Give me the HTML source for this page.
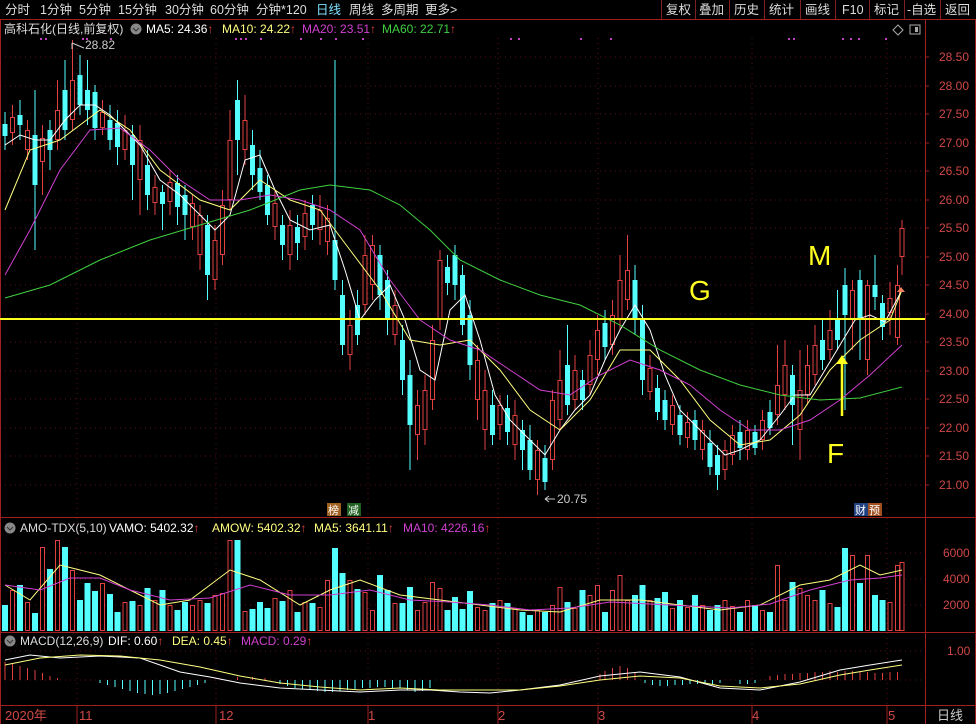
<!DOCTYPE html>
<html><head><meta charset="utf-8">
<style>
html,body{margin:0;padding:0;background:#000;width:976px;height:724px;overflow:hidden}
svg{display:block}
text{font-family:"Liberation Sans","Noto Sans CJK SC",sans-serif}
</style></head><body>
<svg width="976" height="724" xmlns="http://www.w3.org/2000/svg">
<rect width="976" height="724" fill="#000"/>
<!-- grid -->
<g stroke="#5a1010" stroke-dasharray="1 4">
<line x1="0" y1="57" x2="925" y2="57"/><line x1="0" y1="86" x2="925" y2="86"/><line x1="0" y1="114" x2="925" y2="114"/><line x1="0" y1="143" x2="925" y2="143"/><line x1="0" y1="171" x2="925" y2="171"/><line x1="0" y1="200" x2="925" y2="200"/><line x1="0" y1="228" x2="925" y2="228"/><line x1="0" y1="257" x2="925" y2="257"/><line x1="0" y1="285" x2="925" y2="285"/><line x1="0" y1="314" x2="925" y2="314"/><line x1="0" y1="342" x2="925" y2="342"/><line x1="0" y1="371" x2="925" y2="371"/><line x1="0" y1="399" x2="925" y2="399"/><line x1="0" y1="428" x2="925" y2="428"/><line x1="0" y1="456" x2="925" y2="456"/><line x1="0" y1="485" x2="925" y2="485"/>
<line x1="0" y1="553" x2="925" y2="553"/><line x1="0" y1="579" x2="925" y2="579"/><line x1="0" y1="605" x2="925" y2="605"/>
<line x1="0" y1="651" x2="925" y2="651"/><line x1="0" y1="680" x2="925" y2="680"/>
<line x1="77" y1="38" x2="77" y2="705"/><line x1="216" y1="38" x2="216" y2="705"/><line x1="368" y1="38" x2="368" y2="705"/><line x1="498" y1="38" x2="498" y2="705"/><line x1="598" y1="38" x2="598" y2="705"/><line x1="752" y1="38" x2="752" y2="705"/><line x1="887" y1="38" x2="887" y2="705"/>
</g>
<g stroke="#a02020"><path d="M77 705V724M216 705V724M368 705V724M498 705V724M598 705V724M752 705V724M887 705V724"/></g>
<!-- candles -->
<path fill="none" stroke="#54ffff" stroke-width="1" d="M5 112V150M20 100V140M35 90V250M50 120V170M65 60V140M80 55V115M87.5 60V125M95 85V140M110 105V150M117.5 110V165M132.5 125V200M147.5 150V210M162.5 185V230M177.5 175V225M185 185V240M207.5 215V300M237.5 80V175M252.5 130V190M260 150V200M267.5 175V225M282.5 215V260M297.5 215V260M312.5 195V240M335 60V290M342.5 280V355M357.5 290V345M380 245V310M387.5 270V335M402.5 325V395M410 360V470M447.5 255V295M455 245V300M462.5 265V335M470 300V380M492.5 390V445M507.5 395V445M522.5 420V470M530 425V480M545 445V490M567.5 325V415M582.5 370V410M605 310V360M635 265V335M642.5 305V395M657.5 375V420M665 390V430M680 405V445M695 410V450M710 430V475M717.5 445V490M740 420V460M755 425V455M770 400V435M792.5 365V445M822.5 320V370M837.5 290V350M845 268V410M860 270V360M875 255V310M882.5 295V340"/>
<path fill="none" stroke="#54ffff" stroke-width="5" d="M5 124V136M20 115V125M35 135V185M50 130V150M65 90V130M80 75V105M87.5 90V110M95 92V128M110 120V140M117.5 123V147M132.5 135V165M147.5 165V195M162.5 192V204M177.5 183V207M185 195V215M207.5 225V275M237.5 100V140M252.5 145V175M260 168V192M267.5 185V215M282.5 225V245M297.5 227V243M312.5 205V225M335 240V280M342.5 295V345M357.5 305V335M380 255V295M387.5 280V320M402.5 340V380M410 375V425M447.5 267V283M455 255V285M462.5 275V325M470 315V365M492.5 405V435M507.5 408V432M522.5 430V450M530 440V470M545 458V482M567.5 365V405M582.5 380V400M605 323V347M635 280V320M642.5 320V380M657.5 388V412M665 400V420M680 415V435M695 420V440M710 443V467M717.5 455V475M740 432V448M755 432V448M770 412V428M792.5 375V405M822.5 340V360M837.5 320V340M845 285V315M860 280V320M875 285V297M882.5 303V327"/>
<path fill="none" stroke="#e04040" stroke-width="1" d="M12.5 105V145M27.5 120V160M42.5 125V195M57.5 80V150M72.5 40V130M102.5 100V135M125 115V160M140 125V215M155 175V215M170 170V215M192.5 195V240M200 205V270M215 225V290M222.5 190V265M230 110V210M245 95V165M275 190V240M290 210V270M305 200V250M320 195V245M327.5 205V255M350 310V370M365 235V315M372.5 235V300M395 290V345M417.5 390V460M425 375V445M432.5 325V410M440 250V330M477.5 345V420M485 370V450M500 395V440M515 400V460M537.5 440V495M552.5 390V470M560 350V430M575 355V410M590 340V395M597.5 315V375M612.5 300V355M620 255V330M627.5 235V310M650 355V400M672.5 395V435M687.5 412V448M702.5 420V460M725 440V480M732.5 425V465M747.5 420V460M762.5 410V450M777.5 345V425M785 340V410M800 350V460M807.5 345V405M815 325V385M830 310V360M852.5 280V350M867.5 280V375M890 282V335M897.5 265V345M902 220V275"/>
<g fill="none" stroke-width="5">
<path id="rb" stroke="#e04040" d="M12.5 117V133M27.5 130V150M42.5 138V162M57.5 110V140M72.5 80V120M102.5 112V128M125 130V150M140 140V180M155 187V203M170 182V202M192.5 203V227M200 215V255M215 240V280M222.5 205V255M230 140V200M245 120V150M275 203V227M290 225V255M305 213V237M320 210V230M327.5 218V242M350 325V355M365 255V305M372.5 245V285M395 305V335M417.5 405V435M425 390V430M432.5 340V400M440 260V320M477.5 360V400M485 390V430M500 405V425M515 415V445M537.5 450V480M552.5 400V460M560 380V420M575 370V400M590 355V385M597.5 330V360M612.5 315V345M620 280V320M627.5 270V300M650 368V392M672.5 405V425M687.5 422V438M702.5 430V450M725 450V470M732.5 435V455M747.5 430V450M762.5 420V440M777.5 385V415M785 365V395M800 390V430M807.5 365V395M815 345V375M830 330V350M852.5 290V320M867.5 285V360M890 298V313M897.5 285V338M902 228V257"/>
</g>
<path fill="none" stroke="#000" stroke-width="3" d="M12.5 118V132M27.5 131V149M42.5 139V161M57.5 111V139M72.5 81V119M102.5 113V127M125 131V149M140 141V179M155 188V202M170 183V201M192.5 204V226M200 216V254M215 241V279M222.5 206V254M230 141V199M245 121V149M275 204V226M290 226V254M305 214V236M320 211V229M327.5 219V241M350 326V354M365 256V304M372.5 246V284M395 306V334M417.5 406V434M425 391V429M432.5 341V399M440 261V319M477.5 361V399M485 391V429M500 406V424M515 416V444M537.5 451V479M552.5 401V459M560 381V419M575 371V399M590 356V384M597.5 331V359M612.5 316V344M620 281V319M627.5 271V299M650 369V391M672.5 406V424M687.5 423V437M702.5 431V449M725 451V469M732.5 436V454M747.5 431V449M762.5 421V439M777.5 386V414M785 366V394M800 391V429M807.5 366V394M815 346V374M830 331V349M852.5 291V319M867.5 286V359M890 299V312M897.5 286V337M902 229V256"/>
<!-- MAs -->
<g fill="none" stroke-width="1">
<polyline stroke="#fff" points="5,145 20,135 35,140 50,140 65,120 80,105 95,105 110,115 125,130 140,145 160,180 180,195 200,215 215,230 230,215 245,160 260,155 275,190 290,220 310,230 330,225 345,270 360,320 375,300 390,285 405,320 420,370 435,380 450,310 465,295 480,340 495,395 510,420 530,440 545,455 560,430 575,410 590,395 605,360 620,330 635,305 650,330 665,375 680,410 695,425 710,440 725,455 740,450 760,440 780,415 795,395 810,395 825,370 840,345 855,320 870,315 885,322 902,290"/>
<polyline stroke="#ffff80" points="5,210 30,150 60,140 100,110 130,130 160,170 200,200 230,210 260,180 290,200 320,210 350,250 380,290 410,340 440,345 470,340 500,370 530,410 560,430 590,400 620,350 650,350 680,380 710,420 740,445 770,440 800,415 830,370 860,340 890,320 902,290"/>
<polyline stroke="#d040d0" points="5,275 30,230 60,170 90,130 120,128 150,150 180,180 210,200 240,200 270,195 300,200 330,210 360,230 390,280 420,320 450,340 480,350 510,370 540,390 570,395 600,375 630,360 660,370 690,385 720,410 750,430 780,430 810,420 840,400 870,375 902,345"/>
<polyline stroke="#40d040" points="5,298 50,285 100,260 150,240 200,225 250,210 300,190 330,185 370,190 400,205 430,230 460,260 500,280 540,295 580,305 620,325 660,350 700,370 740,385 780,395 820,400 860,398 902,387"/>
</g>
<!-- volume -->
<path fill="none" stroke="#54ffff" stroke-width="6" d="M5 605V631M20 585V631M35 613V631M50 569V631M65 547V631M80 600V631M87.5 583V631M95 591V631M110 594V631M117.5 612V631M132.5 601V631M147.5 588V631M162.5 590V631M177.5 610V631M185 602V631M207.5 603V631M237.5 540V631M252.5 609V631M260 602V631M267.5 608V631M282.5 601V631M297.5 612V631M312.5 603V631M335 548V631M342.5 573V631M357.5 589V631M380 575V631M387.5 590V631M402.5 603V631M410 587V631M447.5 610V631M455 597V631M462.5 609V631M470 591V631M492.5 603V631M507.5 603V631M522.5 612V631M530 615V631M545 612V631M567.5 602V631M582.5 590V631M605 612V631M635 595V631M642.5 585V631M657.5 598V631M665 592V631M680 600V631M695 595V631M710 610V631M717.5 605V631M740 612V631M755 605V631M770 612V631M792.5 582V631M822.5 590V631M837.5 607V631M845 548V631M860 583V631M875 595V631M882.5 600V631"/>
<path fill="none" stroke="#e04040" stroke-width="5" d="M12.5 590V631M27.5 602V631M42.5 547V631M57.5 540V631M72.5 570V631M102.5 583V631M125 602V631M140 605V631M155 600V631M170 605V631M192.5 605V631M200 600V631M215 595V631M222.5 593V631M230 540V631M245 611V631M275 598V631M290 590V631M305 602V631M320 607V631M327.5 580V631M350 580V631M365 592V631M372.5 610V631M395 603V631M417.5 610V631M425 602V631M432.5 582V631M440 588V631M477.5 607V631M485 610V631M500 600V631M515 608V631M537.5 610V631M552.5 605V631M560 587V631M575 608V631M590 595V631M597.5 585V631M612.5 590V631M620 575V631M627.5 600V631M650 600V631M672.5 608V631M687.5 607V631M702.5 605V631M725 600V631M732.5 606V631M747.5 600V631M762.5 610V631M777.5 565V631M785 600V631M800 588V631M807.5 595V631M815 600V631M830 603V631M852.5 555V631M867.5 555V631M890 602V631M897.5 565V631M902 562V631"/>
<path fill="none" stroke="#000" stroke-width="3" d="M12.5 591V630M27.5 603V630M42.5 548V630M57.5 541V630M72.5 571V630M102.5 584V630M125 603V630M140 606V630M155 601V630M170 606V630M192.5 606V630M200 601V630M215 596V630M222.5 594V630M230 541V630M245 612V630M275 599V630M290 591V630M305 603V630M320 608V630M327.5 581V630M350 581V630M365 593V630M372.5 611V630M395 604V630M417.5 611V630M425 603V630M432.5 583V630M440 589V630M477.5 608V630M485 611V630M500 601V630M515 609V630M537.5 611V630M552.5 606V630M560 588V630M575 609V630M590 596V630M597.5 586V630M612.5 591V630M620 576V630M627.5 601V630M650 601V630M672.5 609V630M687.5 608V630M702.5 606V630M725 601V630M732.5 607V630M747.5 601V630M762.5 611V630M777.5 566V630M785 601V630M800 589V630M807.5 596V630M815 601V630M830 604V630M852.5 556V630M867.5 556V630M890 603V630M897.5 566V630M902 563V630"/>
<g fill="none">
<polyline stroke="#ffff80" points="5,585 30,600 60,565 80,570 100,575 130,590 160,605 190,600 230,570 260,580 300,605 330,590 360,580 400,595 440,600 480,605 520,610 560,612 600,600 640,600 680,605 720,610 760,605 800,585 830,580 860,565 880,575 902,570"/>
<polyline stroke="#d040d0" points="5,585 40,590 70,578 100,578 130,590 170,600 210,598 250,585 290,595 330,595 370,590 410,600 450,602 490,605 530,610 570,608 610,602 650,604 690,606 730,608 770,604 810,590 850,580 880,578 902,575"/>
</g>
<!-- MACD -->
<path stroke="#e04040" d="M5 680V662M12.5 680V664M20 680V666M27.5 680V668M35 680V670M42.5 680V673M50 680V676M57.5 680V678M237.5 680V677M252.5 680V677M265 680V678M600 680V674M605 680V671M612.5 680V668M620 680V666M627.5 680V668M635 680V672M770 680V676M777.5 680V675M785 680V674M792.5 680V674M800 680V673M807.5 680V673M815 680V672M822.5 680V672M830 680V671M837.5 680V672M845 680V671M852.5 680V671M860 680V672M867.5 680V672M875 680V673M882.5 680V673M890 680V672M897.5 680V672"/>
<path stroke="#54ffff" d="M100 680V683M107.5 680V685M115 680V687M122.5 680V689M130 680V691M137.5 680V693M145 680V694M152.5 680V695M160 680V694M167.5 680V693M175 680V691M182.5 680V689M190 680V687M197.5 680V685M205 680V683M280 680V684M287.5 680V686M295 680V688M302.5 680V689M310 680V690M317.5 680V691M325 680V692M332.5 680V692M340 680V691M347.5 680V690M355 680V689M362.5 680V688M370 680V688M377.5 680V687M385 680V687M392.5 680V688M400 680V688M407.5 680V690M415 680V692M422.5 680V691M430 680V688M645 680V683M652.5 680V685M660 680V686M667.5 680V686M675 680V685M682.5 680V685M690 680V684M697.5 680V684M705 680V683M712.5 680V684M720 680V683M740 680V684M747.5 680V684M755 680V683"/>
<g fill="none">
<polyline stroke="#fff" points="5,660 30,655 60,658 100,656 140,658 180,672 210,677 240,683 280,688 320,690 360,692 400,690 430,690 460,692 490,693 520,690 560,685 600,676 640,672 680,677 720,688 760,690 800,682 840,670 870,665 902,660"/>
<polyline stroke="#ffff80" points="5,665 40,658 80,655 120,656 160,660 200,667 240,676 280,683 320,687 360,690 400,688 440,690 480,690 520,690 560,686 600,680 640,676 680,678 720,686 760,688 800,684 840,675 870,670 902,665"/>
</g>
<!-- frames -->
<g stroke="#a02020" stroke-width="1" fill="none">
<line x1="0" y1="19.5" x2="976" y2="19.5"/>
<line x1="0" y1="517.5" x2="976" y2="517.5"/>
<line x1="0" y1="632.5" x2="976" y2="632.5"/>
<line x1="0" y1="705.5" x2="976" y2="705.5"/>
<line x1="925.5" y1="19" x2="925.5" y2="724"/>
<line x1="0.5" y1="19" x2="0.5" y2="724"/>
<line x1="975.5" y1="19" x2="975.5" y2="724"/>
</g>
<!-- top tabs -->
<g font-size="12.5" fill="#ddd">
<text x="5" y="14">分时</text><text x="40" y="14">1分钟</text><text x="79" y="14">5分钟</text><text x="118" y="14">15分钟</text><text x="165" y="14">30分钟</text><text x="210" y="14">60分钟</text><text x="256" y="14">分钟*120</text><text x="316" y="14" fill="#7fe0ff">日线</text><text x="349" y="14">周线</text><text x="381" y="14">多周期</text><text x="425" y="14">更多&gt;</text>
<text x="666" y="14">复权</text><text x="699" y="14">叠加</text><text x="734" y="14">历史</text><text x="769" y="14">统计</text><text x="805" y="14">画线</text><text x="842" y="14">F10</text><text x="874" y="14">标记</text><text x="907" y="14">-自选</text><text x="945" y="14">返回</text>
</g>
<g stroke="#802020"><line x1="661.5" y1="0" x2="661.5" y2="19"/><line x1="695.5" y1="0" x2="695.5" y2="19"/><line x1="729.5" y1="0" x2="729.5" y2="19"/><line x1="764.5" y1="0" x2="764.5" y2="19"/><line x1="800.5" y1="0" x2="800.5" y2="19"/><line x1="835.5" y1="0" x2="835.5" y2="19"/><line x1="869.5" y1="0" x2="869.5" y2="19"/><line x1="904.5" y1="0" x2="904.5" y2="19"/><line x1="940.5" y1="0" x2="940.5" y2="19"/></g>
<!-- top markers -->
<path stroke="#c040c0" stroke-width="2" d="M40 39h2M45 39h2M82 39h2M86 39h2M110 39h2M235 39h2M240 39h2M245 39h2M260 39h2M300 39h2M320 39h2M335 39h2M362 39h2M510 39h2M518 39h2M580 39h2M610 39h2M788 39h2M793 39h2M842 39h2M850 39h2M858 39h2M885 39h2"/>
<!-- legend -->
<g font-size="12">
<text x="4" y="33" fill="#ddd">高科石化(日线,前复权)</text>
<circle cx="136" cy="29" r="5.5" fill="#888"/><path d="M133 28l3 3 3-3" stroke="#333" fill="none"/>
<text x="146" y="33" fill="#fff">MA5: 24.36<tspan fill="#e04040">↑</tspan></text>
<text x="222" y="33" fill="#ffff80">MA10: 24.22<tspan fill="#e04040">↑</tspan></text>
<text x="302" y="33" fill="#d040d0">MA20: 23.51<tspan fill="#e04040">↑</tspan></text>
<text x="382" y="33" fill="#40d040">MA60: 22.71<tspan fill="#e04040">↑</tspan></text>
<text x="85" y="49" fill="#ccc">28.82</text>
<text x="557" y="503" fill="#ccc">20.75</text>
<path d="M72 43v6M72 43l12 5" stroke="#ccc" fill="none"/>
<path d="M545 499h10M545 499l4 -3M545 499l4 3" stroke="#ccc" fill="none"/>
<path d="M893 30l5-5 5 5-5 5z" stroke="#aaa" fill="none"/>
<rect x="910" y="25" width="10" height="9" stroke="#aaa" fill="none"/><rect x="915" y="27" width="3" height="5" fill="#aaa"/>
<rect x="327" y="503" width="14" height="13" fill="#a06020"/><text x="328" y="514" fill="#fff" font-size="11">榜</text>
<rect x="347" y="503" width="14" height="13" fill="#206020"/><text x="348" y="514" fill="#fff" font-size="11">减</text>
<rect x="854" y="503" width="14" height="13" fill="#204080"/><text x="855" y="514" fill="#fff" font-size="11">财</text>
<rect x="868" y="503" width="14" height="13" fill="#a05020"/><text x="869" y="514" fill="#fff" font-size="11">预</text>
<circle cx="10" cy="528" r="5.5" fill="#888"/><path d="M7 527l3 3 3-3" stroke="#333" fill="none"/>
<text x="20" y="532" fill="#ddd">AMO-TDX(5,10)</text>
<text x="109" y="532" fill="#fff">VAMO: 5402.32<tspan fill="#e04040">↑</tspan></text>
<text x="212" y="532" fill="#ffff80">AMOW: 5402.32<tspan fill="#e04040">↑</tspan></text>
<text x="314" y="532" fill="#ffff80">MA5: 3641.11<tspan fill="#e04040">↑</tspan></text>
<text x="403" y="532" fill="#d040d0">MA10: 4226.16<tspan fill="#e04040">↑</tspan></text>
<circle cx="10" cy="641" r="5.5" fill="#888"/><path d="M7 640l3 3 3-3" stroke="#333" fill="none"/>
<text x="20" y="645" fill="#ddd">MACD(12,26,9)</text>
<text x="108" y="645" fill="#fff">DIF: 0.60<tspan fill="#e04040">↑</tspan></text>
<text x="172" y="645" fill="#ffff80">DEA: 0.45<tspan fill="#e04040">↑</tspan></text>
<text x="241" y="645" fill="#d040d0">MACD: 0.29<tspan fill="#e04040">↑</tspan></text>
</g>
<!-- axes -->
<g font-size="12" fill="#d04848">
<text x="939" y="61">28.50</text><text x="939" y="90">28.00</text><text x="939" y="118">27.50</text><text x="939" y="147">27.00</text><text x="939" y="175">26.50</text><text x="939" y="204">26.00</text><text x="939" y="232">25.50</text><text x="939" y="261">25.00</text><text x="939" y="289">24.50</text><text x="939" y="318">24.00</text><text x="939" y="346">23.50</text><text x="939" y="375">23.00</text><text x="939" y="403">22.50</text><text x="939" y="432">22.00</text><text x="939" y="460">21.50</text><text x="939" y="489">21.00</text>
<text x="943" y="557">6000</text><text x="943" y="583">4000</text><text x="943" y="609">2000</text>
<text x="947" y="655">1.00</text>
</g>
<path stroke="#a02020" d="M925 57h4M925 86h4M925 114h4M925 143h4M925 171h4M925 200h4M925 228h4M925 257h4M925 285h4M925 314h4M925 342h4M925 371h4M925 399h4M925 428h4M925 456h4M925 485h4"/>
<g font-size="13" fill="#d04848">
<text x="5" y="720">2020年</text><text x="79" y="720">11</text><text x="219" y="720">12</text><text x="368" y="720">1</text><text x="498" y="720">2</text><text x="598" y="720">3</text><text x="752" y="720">4</text><text x="888" y="720">5</text>
</g>
<text x="937" y="720" font-size="13" fill="#ccc">日线</text>
<!-- annotations -->
<line x1="0" y1="319" x2="925" y2="319" stroke="#ffff20" stroke-width="2"/>
<g font-size="28" fill="#ffff20"><text x="689" y="300">G</text><text x="808" y="265">M</text><text x="827" y="463">F</text></g>
<line x1="842" y1="416" x2="842" y2="362" stroke="#ffff20" stroke-width="2.5"/><path d="M836 364l6-9 6 9z" fill="#ffff20"/>
<path d="M897 292l4-5 4 5z" fill="#f08060"/>
</svg>
</body></html>
